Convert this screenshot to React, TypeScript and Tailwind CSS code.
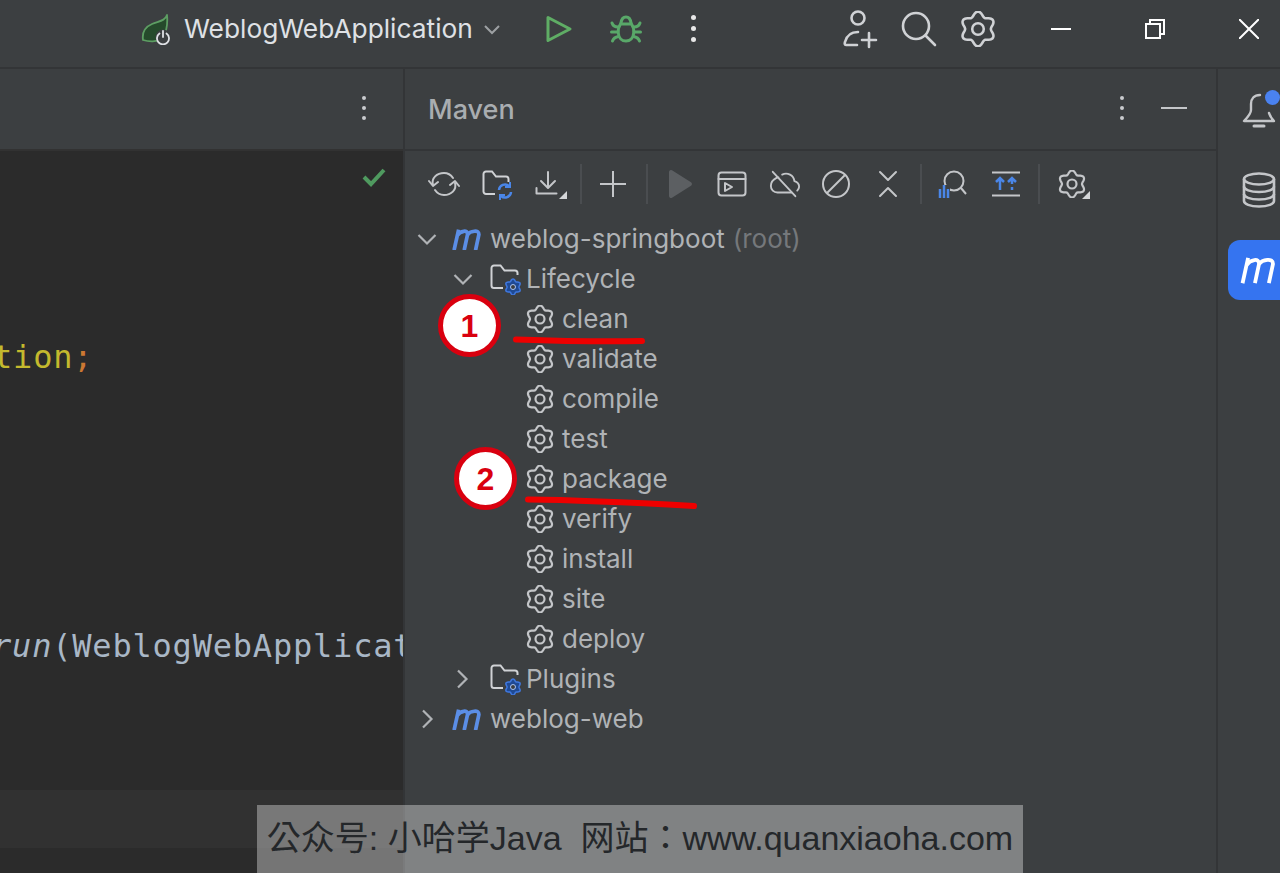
import type { ReactNode } from "react";

const SANS = "font-['Inter','Noto_Sans',sans-serif]";

// six-lobed gear outline, same shape everywhere in the IDE
function gearPath(cx: number, cy: number, r: number) {
  const pts: string[] = [];
  for (let i = 0; i < 96; i++) {
    const a = (i / 96) * Math.PI * 2 - Math.PI / 2;
    const rr = r * (0.87 + 0.13 * Math.cos(6 * (a + Math.PI / 2)));
    pts.push(`${(cx + rr * Math.cos(a)).toFixed(2)} ${(cy + rr * Math.sin(a)).toFixed(2)}`);
  }
  return `M${pts.join("L")}Z`;
}

function Gear({ size = 28, color = "#c4c6c9", width = 2.2 }: { size?: number; color?: string; width?: number }) {
  return (
    <svg width={size} height={size} viewBox="0 0 28 28" fill="none" stroke={color} strokeWidth={width} strokeLinejoin="round">
      <path d={gearPath(14, 14, 13.5)} />
      <circle cx="14" cy="14" r="4.5" />
    </svg>
  );
}

function Corner() {
  return <span className="absolute right-[-2px] bottom-[1px] w-0 h-0 border-l-[8px] border-l-transparent border-b-[8px] border-b-[#d4d6d8]" />;
}

function SpringIcon() {
  return (
    <svg width="32" height="32" viewBox="0 0 32 32" fill="none">
      <path d="M26 2C24 8 18 8 11 11C4 14 1 20 2 27C8 29 16 29 20 26C25 22 27 12 26 2Z" fill="#254a2b" stroke="#5d9e63" strokeWidth="1.8" strokeLinejoin="round" />
      <circle cx="22" cy="24" r="7.5" fill="#3c3f41" />
      <path d="M18.5 20.5a6 6 0 1 0 7 0" stroke="#dfe1e5" strokeWidth="1.8" strokeLinecap="round" />
      <path d="M22 18v6" stroke="#dfe1e5" strokeWidth="1.8" strokeLinecap="round" />
    </svg>
  );
}

function BugIcon() {
  return (
    <svg width="32" height="32" viewBox="0 0 32 32" fill="none" stroke="#59a869" strokeWidth="3" strokeLinecap="round">
      <path d="M10.5 11h11c2 3 2.5 6 2.2 9c-.4 5-3.7 8-7.7 8s-7.3-3-7.7-8c-.3-3 .2-6 2.2-9Z" />
      <path d="M11 10c.5-4 2.5-6 5-6s4.500 2 5 6" />
      <path d="M2 10c1 3 3 4 6 4M30 10c-1 3-3 4-6 4M1.500 19h6M30.500 19h-6M2.500 28c1-3 3-4 6-4.500M29.500 28c-1-3-3-4-6-4.500" />
    </svg>
  );
}

function Dots({ color = "#c9cbce", gap = "gap-[6px]", dot = "w-1 h-1" }: { color?: string; gap?: string; dot?: string }) {
  return (
    <div className={`flex flex-col items-center ${gap}`}>
      <span className={`${dot} rounded-full`} style={{ background: color }} />
      <span className={`${dot} rounded-full`} style={{ background: color }} />
      <span className={`${dot} rounded-full`} style={{ background: color }} />
    </div>
  );
}

function MavenM({ color = "#5b8ee6", size = 31, weight = 3.6 }: { color?: string; size?: number; weight?: number }) {
  return (
    <svg width={size} height={(size * 22) / 30} viewBox="0 0 30 22" fill="none" stroke={color} strokeWidth={weight}>
      <path d="M2 21.500L6.400 1.500" />
      <path d="M5.300 7C8 3 15.500 1 15 6.500L11.800 21.500" />
      <path d="M15 6.500C17.500 3 26.500 1 26 6.500L22.800 21.500" />
    </svg>
  );
}

function FolderGear() {
  return (
    <svg width="32" height="32" viewBox="0 0 32 32" fill="none">
      <path d="M13 25H4a2.500 2.500 0 0 1-2.500-2.500V5A2.500 2.500 0 0 1 4 2.500h6.500l4 5H25A2.500 2.500 0 0 1 27.500 10v2" stroke="#d0d2d5" strokeWidth="2" />
      <circle cx="23" cy="24" r="9.500" fill="#3c3f41" />
      <path d={gearPath(23, 24, 8)} fill="#1f4a94" stroke="#3f78e0" strokeWidth="1.500" />
      <circle cx="23" cy="24" r="2.500" fill="#3c3f41" stroke="#a9c4f5" strokeWidth="1" />
    </svg>
  );
}

function Chevron({ open, color = "#b0b3b6" }: { open: boolean; color?: string }) {
  return (
    <svg width="20" height="20" viewBox="0 0 20 20" fill="none" stroke={color} strokeWidth="2.200">
      {open ? <path d="M1.500 6L10 14.500L18.500 6" /> : <path d="M6 1.500L14.500 10L6 18.500" />}
    </svg>
  );
}

function ToolIcon({ className, children }: { className: string; children: ReactNode }) {
  return <div className={`relative w-8 h-8 shrink-0 flex items-center justify-center ${className}`}>{children}</div>;
}

function Sep({ className }: { className: string }) {
  return <div className={`w-[2px] h-10 bg-[#4a4d50] shrink-0 ${className}`} />;
}

const S = { fill: "none", stroke: "#c4c6c9", strokeWidth: 2, strokeLinecap: "round" as const, strokeLinejoin: "round" as const };

function MavenToolbar() {
  return (
    <div className="flex items-center h-[68px] pl-[23px] pb-[2px]">
      <ToolIcon className="">
        <svg width="32" height="28" viewBox="0 0 32 28" {...S}>
          <path d="M5 15C3 8 9 3 16 3c4 0 7 2 9 5" />
          <path d="M27 13c2 7-4 12-11 12c-4 0-7-2-9-5" />
          <path d="M1 11l4 5l5-4M22 15l5-4l4 5" />
        </svg>
      </ToolIcon>
      <ToolIcon className="ml-[21px]">
        <svg width="32" height="32" viewBox="0 0 32 32" fill="none">
          <path d="M14 26H5a2.500 2.500 0 0 1-2.500-2.500V6A2.500 2.500 0 0 1 5 3.500h6l4 5h10A2.500 2.500 0 0 1 27.500 11v3" stroke="#d0d2d5" strokeWidth="2" />
          <path d="M18 22a6 6 0 0 1 10-4M30 24a6 6 0 0 1-10 4" stroke="#4a86e8" strokeWidth="2.500" />
          <path d="M29 14v5h-5M19 32v-5h5" stroke="#4a86e8" strokeWidth="2" />
        </svg>
      </ToolIcon>
      <ToolIcon className="ml-[20px]">
        <svg width="28" height="28" viewBox="0 0 28 28" {...S}>
          <path d="M13 2v15M6 11l7 7l7-7M1.500 18v5.500h20" />
        </svg>
        <Corner />
      </ToolIcon>
      <Sep className="ml-[15px]" />
      <ToolIcon className="ml-[15px]">
        <svg width="28" height="28" viewBox="0 0 28 28" stroke="#c4c6c9" strokeWidth="2"><path d="M14 1v26M1 14h26" /></svg>
      </ToolIcon>
      <Sep className="ml-[17px]" />
      <ToolIcon className="ml-[16px]">
        <svg width="26" height="30" viewBox="0 0 26 30" fill="#5c5f62"><path d="M2 3a2 2 0 0 1 3-1.700l19 12a2 2 0 0 1 0 3.400l-19 12A2 2 0 0 1 2 27Z" /></svg>
      </ToolIcon>
      <ToolIcon className="ml-[20px]">
        <svg width="30" height="26" viewBox="0 0 30 26" {...S}>
          <rect x="1.500" y="1.500" width="27" height="23" rx="3" />
          <path d="M1.500 8h27M8 12v8l7-4Z" />
        </svg>
      </ToolIcon>
      <ToolIcon className="ml-[21px]">
        <svg width="34" height="30" viewBox="0 0 34 30" {...S}>
          <path d="M10 8a8 8 0 0 0-2 .500C5 10 2 13 2 17c0 4 3 7 7 7h15M14 5a9 9 0 0 1 13 7c3 1 5 3 5 6c0 2-1 3-2 4" />
          <path d="M4 2l24 26" />
        </svg>
      </ToolIcon>
      <ToolIcon className="ml-[19px]">
        <svg width="30" height="30" viewBox="0 0 30 30" {...S}><circle cx="15" cy="15" r="13" /><path d="M6 24L24 6" /></svg>
      </ToolIcon>
      <ToolIcon className="ml-[20px]">
        <svg width="20" height="28" viewBox="0 0 20 28" {...S}><path d="M2 2l8 8l8-8M2 26l8-8l8 8" /></svg>
      </ToolIcon>
      <Sep className="ml-[16px]" />
      <ToolIcon className="ml-[14px]">
        <svg width="30" height="30" viewBox="0 0 30 30" fill="none">
          <circle cx="17" cy="12" r="9.500" stroke="#c4c6c9" strokeWidth="2" />
          <path d="M24 19l5 6" stroke="#c4c6c9" strokeWidth="2" />
          <rect x="1" y="16" width="12" height="13" fill="#3c3f41" />
          <path d="M3 20v9M7 16v13M11 20v9" stroke="#4a86e8" strokeWidth="2.500" />
        </svg>
      </ToolIcon>
      <ToolIcon className="ml-[22px]">
        <svg width="30" height="26" viewBox="0 0 30 26" fill="none">
          <path d="M1 1.500h28M1 24.500h28" stroke="#c4c6c9" strokeWidth="2" />
          <path d="M9 19V7M5 11l4-4l4 4" stroke="#4a86e8" strokeWidth="2.500" />
          <path d="M21 19v-3M21 13v-6M17 11l4-4l4 4" stroke="#4a86e8" strokeWidth="2.500" />
        </svg>
      </ToolIcon>
      <Sep className="ml-[16px]" />
      <ToolIcon className="ml-[16px]">
        <Gear size={28} />
        <Corner />
      </ToolIcon>
    </div>
  );
}

function Goal({ name }: { name: string }) {
  return (
    <div className="flex items-center h-10 pl-[121px] gap-[8px]">
      <Gear size={28} />
      <span>{name}</span>
    </div>
  );
}

const goals = ["clean", "validate", "compile", "test", "package", "verify", "install", "site", "deploy"];

function MavenTree() {
  return (
    <div className={`${SANS} text-[26px] text-[#b0b3b6] leading-10`}>
      <div className="flex items-center h-10 pl-[12px]">
        <Chevron open />
        <span className="ml-[15px] mr-[7px] flex"><MavenM /></span>
        <span>weblog-springboot</span>
        <span className="ml-[8px] text-[#75787b]">(root)</span>
      </div>
      <div className="flex items-center h-10 pl-[48px]">
        <Chevron open />
        <span className="ml-[17px] mr-[4px] flex"><FolderGear /></span>
        <span>Lifecycle</span>
      </div>
      {goals.map((g) => (
        <Goal key={g} name={g} />
      ))}
      <div className="flex items-center h-10 pl-[47px]">
        <Chevron open={false} />
        <span className="ml-[18px] mr-[4px] flex"><FolderGear /></span>
        <span>Plugins</span>
      </div>
      <div className="flex items-center h-10 pl-[12px]">
        <Chevron open={false} />
        <span className="ml-[15px] mr-[7px] flex"><MavenM /></span>
        <span>weblog-web</span>
      </div>
    </div>
  );
}

function Badge({ n, className }: { n: string; className: string }) {
  return (
    <div className={`absolute w-[63px] h-[63px] rounded-full bg-white border-[5px] border-[#d9000f] flex items-center justify-center text-[#d9000f] font-bold text-[32px] font-['Liberation_Sans',sans-serif] ${className}`}>
      {n}
    </div>
  );
}

export default function App() {
  return (
    <div className={`relative w-[1280px] h-[873px] overflow-hidden bg-[#3c3f41] ${SANS}`}>
      {/* title bar */}
      <div className="flex items-center h-[69px] border-b-2 border-[#333537] pl-[141px] pb-[10px]">
        <SpringIcon />
        <span className="ml-[11px] text-[26.3px] text-[#dfe1e5]">WeblogWebApplication</span>
        <span className="ml-[10px] flex">
          <svg width="18" height="18" viewBox="0 0 18 18" fill="none" stroke="#9da0a3" strokeWidth="2"><path d="M2 6l7 7l7-7" /></svg>
        </span>
        <span className="ml-[44px] flex">
          <svg width="28" height="30" viewBox="0 0 28 30" fill="none" stroke="#5fad65" strokeWidth="3" strokeLinejoin="round"><path d="M3 3.500L25 15L3 26.500Z" /></svg>
        </span>
        <span className="ml-[37px] flex"><BugIcon /></span>
        <span className="ml-[49px] flex"><Dots color="#e8e8e8" gap="gap-[6px]" dot="w-[5px] h-[5px]" /></span>
        <span className="ml-[146px] flex">
          <svg width="38" height="40" viewBox="0 0 38 40" fill="none" stroke="#d0d2d5" strokeWidth="2.600" strokeLinecap="round">
            <circle cx="16" cy="9" r="6.500" />
            <path d="M15 36H4c-1.500 0-1.500-1.500-1-3c1.500-6 6-10 13-10" />
            <path d="M27 24v14M20 31h14" />
          </svg>
        </span>
        <span className="ml-[21px] flex">
          <svg width="36" height="36" viewBox="0 0 36 36" fill="none" stroke="#d0d2d5" strokeWidth="2.600" strokeLinecap="round"><circle cx="15" cy="15" r="13" /><path d="M25 25l9 9" /></svg>
        </span>
        <span className="ml-[23px] flex"><Gear size={36} color="#d0d2d5" width={2} /></span>
        <span className="ml-[55px] w-5 h-[2px] bg-white" />
        <span className="ml-[74px] flex">
          <svg width="20" height="20" viewBox="0 0 20 20" fill="none" stroke="#fff" strokeWidth="2"><rect x="1" y="5" width="14" height="14" /><path d="M5 5V1h14v14h-4" /></svg>
        </span>
        <span className="ml-[74px] flex">
          <svg width="20" height="20" viewBox="0 0 20 20" stroke="#fff" strokeWidth="2"><path d="M0 0l20 20M20 0L0 20" /></svg>
        </span>
      </div>

      <div className="flex h-[804px]">
        {/* editor column */}
        <div className="w-[403px] shrink-0 flex flex-col">
          <div className="flex items-center justify-end h-[82px] border-b-2 border-[#323232] pr-[37px] pb-[2px]">
            <Dots />
          </div>
          <div className="relative flex-1 bg-[#2b2b2b] overflow-hidden font-['DejaVu_Sans_Mono','Liberation_Mono',monospace] text-[32px] tracking-[0.8px] leading-10 whitespace-nowrap">
            <div className="flex justify-end pr-[17px] pt-[16px]">
              <svg width="24" height="20" viewBox="0 0 24 20" fill="none" stroke="#4f9a5f" strokeWidth="4"><path d="M2 10l7 7L22 3" /></svg>
            </div>
            <div className="mt-[150px] -ml-[7px] text-[#c4b92e]">
              tion<span className="text-[#cc7832]">;</span>
            </div>
            <div className="mt-[249px] -ml-[8px] text-[#a9b7c6]">
              <span className="italic">run</span>(WeblogWebApplicat
            </div>
            <div className="mt-[124px] h-[58px] bg-[#313131]" />
          </div>
        </div>

        {/* maven tool window */}
        <div className="w-[813px] shrink-0 border-l-2 border-[#333537]">
          <div className="flex items-center h-[82px] border-b-2 border-[#333537] pl-[23px] pb-[2px]">
            <span className="text-[27px] font-medium text-[#a9adb0] mt-[5px]">Maven</span>
            <span className="ml-auto flex"><Dots /></span>
            <span className="ml-[37px] mr-[29px] w-[26px] h-[2px] bg-[#c4c6c9]" />
          </div>
          <MavenToolbar />
          <MavenTree />
        </div>

        {/* right stripe */}
        <div className="flex-1 border-l-2 border-[#333537] flex flex-col items-end">
          <div className="relative w-[51px] h-[37px] mt-[24px] flex justify-start pl-[13px]">
            <svg width="34" height="36" viewBox="0 0 34 36" fill="none" stroke="#c4c6c9" strokeWidth="2.400" strokeLinecap="round" strokeLinejoin="round">
              <path d="M18 2c-6 0-9 4-9 9v6c0 3-3 7-7 11h30c-2.500-2.500-4-5-5-8" />
              <path d="M12 33h10" strokeWidth="3" />
            </svg>
            <span className="absolute left-[36px] top-[-3px] w-[15px] h-[15px] rounded-full bg-[#4a82f0]" />
          </div>
          <div className="w-[51px] mt-[42px] pl-[13px] flex">
            <svg width="34" height="36" viewBox="0 0 34 36" fill="none" stroke="#c4c6c9" strokeWidth="2.600">
              <ellipse cx="17" cy="7" rx="15" ry="5.500" />
              <path d="M2 7v22c0 3 6 5.500 15 5.500s15-2.500 15-5.500V7" />
              <path d="M2 14.500c0 3 6 5.500 15 5.500s15-2.500 15-5.500M2 22c0 3 6 5.500 15 5.500s15-2.500 15-5.500" />
            </svg>
          </div>
          <div className="w-[52px] h-[60px] mt-[32px] rounded-l-[12px] bg-[#3574f0] flex items-center pl-[12px]">
            <MavenM color="#ffffff" size={38} weight={3} />
          </div>
        </div>
      </div>

      {/* hand-drawn annotations */}
      <Badge n="1" className="left-[438px] top-[294px]" />
      <Badge n="2" className="left-[454px] top-[447px]" />
      <svg className="absolute left-0 top-0 pointer-events-none" width="1280" height="873" fill="none" stroke="#ee0000" strokeWidth="6" strokeLinecap="round">
        <path d="M516 339.500C560 341 600 342 642 341" />
        <path d="M528 499.500C580 500 640 503 694 506" />
      </svg>

      {/* watermark */}
      <div className="absolute left-[257px] top-[805px] w-[766px] h-[68px] bg-white/35 flex items-center justify-center pb-[2px] text-[34px] text-[#24272a] whitespace-pre font-['Liberation_Sans','Noto_Sans_CJK_TC',sans-serif]">
        公众号: 小哈学Java  网站：www.quanxiaoha.com
      </div>
    </div>
  );
}
